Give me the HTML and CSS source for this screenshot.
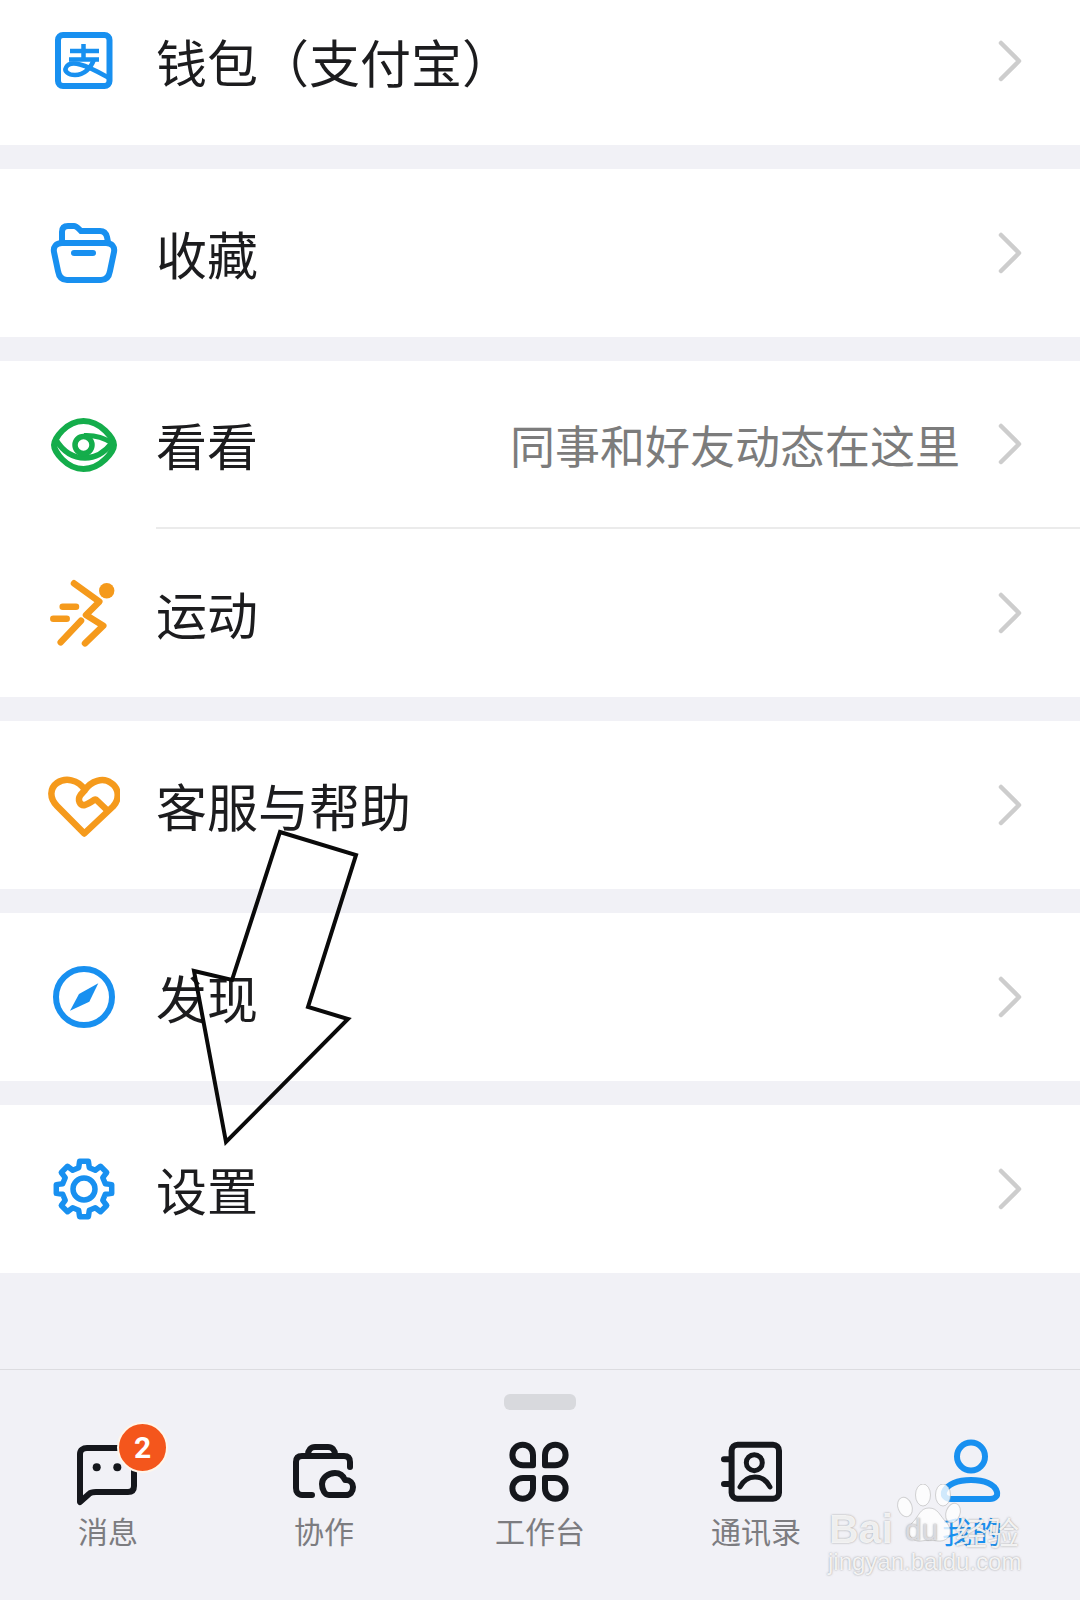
FILE: index.html
```html
<!DOCTYPE html>
<html lang="zh-CN">
<head>
    <meta charset="UTF-8">
    <meta name="viewport" content="width=device-width, initial-scale=1.0">
    <title>我的</title>
    <link rel="stylesheet" href="styles.css">
</head>
<body>
    <div class="screen">
        <div class="menu">
            <div class="group">
                <div class="row">
                    <svg class="row-icon" viewBox="0 0 72 72" fill="none">
                        <rect x="10" y="10" width="51.500" height="51" rx="5" stroke="#1890f0" stroke-width="6"/>
                        <g stroke="#1890f0" stroke-width="4.500">
                            <path d="M22 26H51M35.500 19V34M21 34.500H51"/>
                            <path d="M46 34.500C43 43 36 50 27 50C20 50 16 46 18 42.500C20 38.500 26 38 32 39.500C42 42 52 48 61 53"/>
                        </g>
                    </svg>
                    <div class="row-body">
                        <span class="row-title">钱包（支付宝）</span>
                        <svg class="chevron" viewBox="0 0 28 44" fill="none"><path d="M5 4L23 22L5 40" stroke="#cdcdcd" stroke-width="4.500" stroke-linecap="round" stroke-linejoin="round"/></svg>
                    </div>
                </div>
            </div>

            <div class="group">
                <div class="row">
                    <svg class="row-icon" viewBox="0 0 72 72" fill="none" stroke="#1890f0" stroke-width="6">
                        <path d="M14 26H58C64 26 67 30 66 35L62 54C61 60 58 63 53 63H19C14 63 11 60 10 54L6 35C5 30 8 26 14 26Z"/>
                        <path d="M14 26V15C14 11 16 9 20 9H26C28 9 29 10 31 12L33 14H52C56 14 58 16 59 20L60 25"/>
                        <path d="M26 36H45" stroke-linecap="round"/>
                    </svg>
                    <div class="row-body">
                        <span class="row-title">收藏</span>
                        <svg class="chevron" viewBox="0 0 28 44" fill="none"><path d="M5 4L23 22L5 40" stroke="#cdcdcd" stroke-width="4.500" stroke-linecap="round" stroke-linejoin="round"/></svg>
                    </div>
                </div>
            </div>

            <div class="group">
                <div class="row">
                    <svg class="row-icon" viewBox="0 0 72 72" fill="none" stroke="#14ad4b" stroke-width="6">
                        <path d="M6 36C6 30 18 12 35.500 12C53 12 66 30 66 36C66 42 53 60 35.500 60C18 60 6 42 6 36Z"/>
                        <path d="M8 31C16 44 27 49 37 49C47 49 57 43 64 34" stroke-width="5.500"/>
                        <path d="M64 34C55 28 46 26 36 26.500" stroke-width="5"/>
                        <circle cx="35.500" cy="36" r="8.500" stroke-width="5.500"/>
                    </svg>
                    <div class="row-body has-line">
                        <span class="row-title">看看</span>
                        <span class="row-sub">同事和好友动态在这里</span>
                        <svg class="chevron" viewBox="0 0 28 44" fill="none"><path d="M5 4L23 22L5 40" stroke="#cdcdcd" stroke-width="4.500" stroke-linecap="round" stroke-linejoin="round"/></svg>
                    </div>
                </div>
                <div class="row">
                    <svg class="row-icon" viewBox="0 0 72 72" fill="none" stroke="#f59a1c" stroke-width="6.500" stroke-linecap="round" stroke-linejoin="round">
                        <circle cx="58.700" cy="13.700" r="7.700" fill="#f59a1c" stroke="none"/>
                        <path d="M26 6.300L51.300 24.700L38 38L55.300 48.700L37 66.300"/>
                        <path d="M33 43.700L12.700 65.300"/>
                        <path d="M14.700 29.700H28M5.300 41.700H18.700"/>
                    </svg>
                    <div class="row-body">
                        <span class="row-title">运动</span>
                        <svg class="chevron" viewBox="0 0 28 44" fill="none"><path d="M5 4L23 22L5 40" stroke="#cdcdcd" stroke-width="4.500" stroke-linecap="round" stroke-linejoin="round"/></svg>
                    </div>
                </div>
            </div>

            <div class="group">
                <div class="row">
                    <svg class="row-icon" viewBox="0 0 72 72" fill="none" stroke="#f59a1c" stroke-width="6.500" stroke-linejoin="round">
                        <path d="M36.300 64.500L9 37C1 29 2 19 9 14C17 8.500 30 10 37 21C43 12 55 8 63 14C71 19 72 30 65 37.500L36.300 64.500Z"/>
                        <path d="M37 21L32.500 26C29 31 32 37 37 36C40 35 43 33 46 31C47 30.500 48 30.500 49 31.500L60.500 42.500"/>
                    </svg>
                    <div class="row-body">
                        <span class="row-title">客服与帮助</span>
                        <svg class="chevron" viewBox="0 0 28 44" fill="none"><path d="M5 4L23 22L5 40" stroke="#cdcdcd" stroke-width="4.500" stroke-linecap="round" stroke-linejoin="round"/></svg>
                    </div>
                </div>
            </div>

            <div class="group">
                <div class="row">
                    <svg class="row-icon" viewBox="0 0 72 72" fill="none">
                        <circle cx="36" cy="36" r="28" stroke="#1890f0" stroke-width="6"/>
                        <path d="M50.300 22.300L41.300 40.700L22 49.700L31 33Z" fill="#1890f0"/>
                    </svg>
                    <div class="row-body">
                        <span class="row-title">发现</span>
                        <svg class="chevron" viewBox="0 0 28 44" fill="none"><path d="M5 4L23 22L5 40" stroke="#cdcdcd" stroke-width="4.500" stroke-linecap="round" stroke-linejoin="round"/></svg>
                    </div>
                </div>
            </div>

            <div class="group">
                <div class="row">
                    <svg class="row-icon" viewBox="0 0 72 72" fill="none" stroke="#1890f0" stroke-width="5.500" stroke-linejoin="round">
                        <path d="M30.700 14.700L31.600 8.300H40.400L41.300 14.700L47.300 17.200L52.500 13.300L58.700 19.500L54.800 24.700L57.300 30.700L63.700 31.600V40.400L57.300 41.300L54.800 47.300L58.700 52.500L52.500 58.700L47.300 54.800L41.300 57.300L40.400 63.700H31.600L30.700 57.300L24.700 54.800L19.500 58.700L13.300 52.500L17.200 47.300L14.700 41.300L8.300 40.400V31.600L14.700 30.700L17.200 24.700L13.300 19.500L19.500 13.300L24.700 17.200Z"/>
                        <circle cx="36" cy="36" r="11"/>
                    </svg>
                    <div class="row-body">
                        <span class="row-title">设置</span>
                        <svg class="chevron" viewBox="0 0 28 44" fill="none"><path d="M5 4L23 22L5 40" stroke="#cdcdcd" stroke-width="4.500" stroke-linecap="round" stroke-linejoin="round"/></svg>
                    </div>
                </div>
            </div>
        </div>

        <div class="tabbar">
            <div class="handle"></div>
            <div class="tabs">
                <div class="tab">
                    <div class="tab-icon">
                        <svg viewBox="0 0 72 72" fill="none" stroke="#15171c" stroke-width="6" stroke-linejoin="round">
                            <path d="M8 66V18C8 14 11 12 15 12H54C59 12 62 15 62 19V50C62 54 60 56 56 56H24C21 56 19 56 17 58L8 66Z"/>
                            <circle cx="24.700" cy="31.300" r="4" fill="#15171c" stroke="none"/>
                            <circle cx="45.300" cy="31.300" r="4" fill="#15171c" stroke="none"/>
                        </svg>
                        <span class="badge">2</span>
                    </div>
                    <span class="tab-label">消息</span>
                </div>
                <div class="tab">
                    <div class="tab-icon">
                        <svg viewBox="0 0 72 72" fill="none" stroke="#15171c" stroke-width="6" stroke-linecap="round" stroke-linejoin="round">
                            <path d="M62 31V26C62 22 60 20 56 20H14C10 20 8 22 8 26V52C8 56 10 59 14 59H24"/>
                            <path d="M20 19C20 14 23 11 27 11H40C44 11 47 14 47 19"/>
                            <path d="M41 59H58C62 59 65 56 65 51C65 47 62 44 58 44H57C55 39 51 37 47 37C40 37 34 42 34 48C34 54 37 59 41 59Z"/>
                        </svg>
                    </div>
                    <span class="tab-label">协作</span>
                </div>
                <div class="tab">
                    <div class="tab-icon">
                        <svg viewBox="0 0 72 72" fill="none" stroke="#15171c" stroke-width="6" stroke-linejoin="round">
                            <path d="M29 29.300H19C13 29.300 8.400 25 8.400 19C8.400 13 13 8.700 18.700 8.700C24.500 8.700 29 13 29 19Z"/>
                            <path d="M41 29.300H51C57 29.300 61.600 25 61.600 19C61.600 13 57 8.700 51.300 8.700C45.500 8.700 41 13 41 19Z"/>
                            <path d="M29 42H19C13 42 8.400 46.500 8.400 52.400C8.400 58.400 13 62.700 18.700 62.700C24.500 62.700 29 58.400 29 52.400Z"/>
                            <path d="M41 42H51C57 42 61.600 46.500 61.600 52.400C61.600 58.400 57 62.700 51.300 62.700C45.500 62.700 41 58.400 41 52.400Z"/>
                        </svg>
                    </div>
                    <span class="tab-label">工作台</span>
                </div>
                <div class="tab">
                    <div class="tab-icon">
                        <svg viewBox="0 0 72 72" fill="none" stroke="#15171c" stroke-width="6" stroke-linecap="round">
                            <rect x="11.600" y="8.700" width="47.400" height="54" rx="6"/>
                            <path d="M4 23.300H11M4 48H11"/>
                            <circle cx="34.300" cy="26.700" r="8" stroke-width="5"/>
                            <path d="M20 51C24 43 29 41 35 41C41 41 46 43 50 51" stroke-width="5"/>
                        </svg>
                    </div>
                    <span class="tab-label">通讯录</span>
                </div>
                <div class="tab is-active">
                    <div class="tab-icon">
                        <svg viewBox="0 0 72 72" fill="none" stroke="#1890f0" stroke-width="6">
                            <ellipse cx="35" cy="20.500" rx="14" ry="14"/>
                            <path d="M15 63H54C59 63 62 60 61 56C59 48 48 44 35 44C22 44 11 48 8 56C7 60 10 63 15 63Z"/>
                        </svg>
                    </div>
                    <span class="tab-label">我的</span>
                </div>
            </div>
        </div>

        <!-- hand drawn annotation on top of the screenshot -->
        <svg class="annotation" viewBox="0 0 1080 1600" fill="none">
            <path d="M280 832L356 855L308 1007L348 1019L226 1142L194 971L232 980Z" stroke="#0a0a0a" stroke-width="4"/>
        </svg>

        <div class="watermark">
            <svg class="paw" viewBox="0 0 70 62">
                <ellipse cx="11" cy="23" rx="7" ry="10" transform="rotate(-20 11 23)"/>
                <ellipse cx="29" cy="11" rx="7.500" ry="11"/>
                <ellipse cx="49" cy="11" rx="7.500" ry="11"/>
                <ellipse cx="59" cy="29" rx="7" ry="10" transform="rotate(20 59 29)"/>
                <path d="M35 24C44 24 46 32 52 38C60 46 56 58 44 57C38 56 33 56 27 57C15 58 11 46 19 38C25 32 26 24 35 24Z"/>
            </svg>
            <span class="wm-bai">Bai</span>
            <span class="wm-du">du</span>
            <span class="wm-cn">经验</span>
            <span class="wm-url">jingyan.baidu.com</span>
        </div>
    </div>
</body>
</html>
```

FILE: styles.css
```css
* {
    box-sizing: border-box;
}

body {
    margin: 0;
    font-family: "Noto Sans CJK SC", "Noto Sans", sans-serif;
    background: #f1f1f6;
    color: #1c1c1e;
}

.screen {
    position: relative;
    width: 1080px;
    height: 1600px;
    overflow: hidden;
    display: flex;
    flex-direction: column;
    background: #f1f1f6;
}

.menu {
    margin-top: -23px;
    flex: 1;
}

.group {
    background: #fff;
    margin-bottom: 24px;
}

.row {
    display: flex;
    align-items: center;
    height: 168px;
    padding-left: 48px;
}

.row-icon {
    width: 72px;
    height: 72px;
    flex: none;
    margin-right: 36px;
}

.row-body {
    flex: 1;
    height: 100%;
    display: flex;
    align-items: center;
    padding-right: 56px;
}

.has-line {
    border-bottom: 2px solid #ebebeb;
}

.row-title {
    font-size: 51px;
    line-height: 60px;
    flex: 1;
}

.row-sub {
    font-size: 45px;
    line-height: 60px;
    padding-top: 2px;
    color: #7c7c7c;
    margin-right: 36px;
}

.chevron {
    width: 28px;
    height: 44px;
    flex: none;
}

.tabbar {
    height: 231px;
    border-top: 1px solid #dcdce0;
    background: #f1f1f6;
}

.handle {
    width: 72px;
    height: 16px;
    margin: 24px auto 26px;
    border-radius: 6px;
    background: #d8d9dd;
}

.tabs {
    display: grid;
    grid-template-columns: repeat(5, 216px);
}

.tab {
    display: flex;
    flex-direction: column;
    align-items: center;
}

.tab-icon {
    position: relative;
    width: 72px;
    height: 72px;
}

.tab-icon svg {
    display: block;
    width: 72px;
    height: 72px;
}

.tab-label {
    margin-top: 4px;
    font-size: 30px;
    line-height: 36px;
    color: #7c7c80;
}

.is-active .tab-label {
    color: #1890f0;
}

.badge {
    position: absolute;
    left: 45px;
    top: -14px;
    width: 51px;
    height: 51px;
    border: 2px solid #fff6ea;
    border-radius: 50%;
    background: #f4561c;
    color: #fff;
    font-family: "Roboto", sans-serif;
    font-size: 30px;
    font-weight: 700;
    line-height: 48px;
    text-align: center;
}

.annotation {
    position: absolute;
    left: 0;
    top: 0;
    width: 1080px;
    height: 1600px;
    pointer-events: none;
}

.watermark {
    position: absolute;
    left: 826px;
    top: 1484px;
    width: 200px;
    height: 96px;
    color: rgba(255, 255, 255, 0.85);
    font-family: "Liberation Sans", sans-serif;
    text-shadow: 0 0 2px rgba(110, 110, 110, 0.7);
}

.paw {
    position: absolute;
    left: 68px;
    top: 0;
    width: 70px;
    height: 62px;
    fill: rgba(255, 255, 255, 0.8);
    stroke: rgba(170, 170, 170, 0.5);
    stroke-width: 1;
}

.wm-bai,
.wm-du,
.wm-cn,
.wm-url {
    position: absolute;
    white-space: nowrap;
}

.wm-bai {
    left: 3px;
    top: 25px;
    font-size: 41px;
    font-weight: 700;
    line-height: 40px;
}

.wm-du {
    left: 79px;
    top: 31px;
    font-size: 30px;
    line-height: 30px;
    color: rgba(225, 225, 230, 0.9);
}

.wm-cn {
    left: 129px;
    top: 27px;
    font-family: "Noto Sans CJK SC", sans-serif;
    font-size: 32px;
    line-height: 40px;
}

.wm-url {
    left: 2px;
    top: 64px;
    font-size: 24px;
    line-height: 28px;
}
```
